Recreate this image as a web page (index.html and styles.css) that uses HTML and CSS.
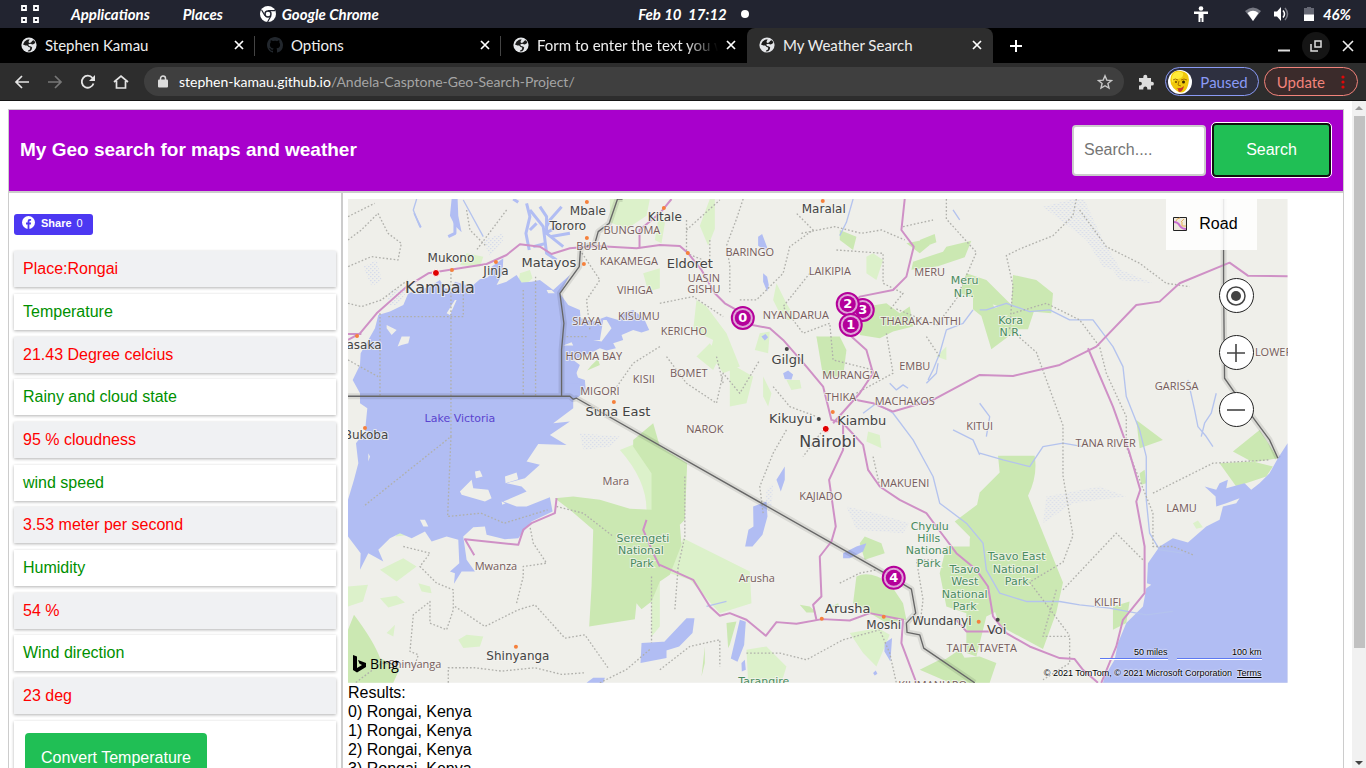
FILE: index.html
```html
<!DOCTYPE html>
<html lang="en">
<head>
<meta charset="utf-8">
<title>My Weather Search</title>
<link rel="stylesheet" href="styles.css">
</head>
<body>
<svg class="defs" width="0" height="0" aria-hidden="true">
  <symbol id="globe" viewBox="0 0 16 16">
    <circle cx="8" cy="8" r="7.6" fill="#e4e6e9"/>
    <path d="M8.600 2.200 6 2.800 3.600 4.600 2 7.600l2.400 1 1.800-.2L7.600 10l1.600.4-.2 2-1.600.8-.6 1.200 2.400-.2 1.400-1.400.6-2.200-1.200-1.200-2-.4-.8-1.400 1.800-.8 2.800.6 1.800-.8 .8-1.400-1.600-2-1.400.6-1.400 1.600-1.600.6-1-1z" fill="#1b1b1b"/>
  </symbol>
  <symbol id="close" viewBox="0 0 10 10"><path d="M1 1 9 9M9 1 1 9" stroke="currentColor" stroke-width="1.700" fill="none"/></symbol>
</svg>

<header class="system">
  <nav class="system-menu">
    <button class="plain" aria-label="Show all apps"><svg width="20" height="20" viewBox="0 0 20 20" fill="none" stroke="#fff" stroke-width="1.800"><path d="M2 2h4v4H2zM14 2h4v4h-4zM2 14h4v4H2zM14 14h4v4h-4z"/></svg></button>
    <button class="plain apps">Applications</button>
    <button class="plain places">Places</button>
    <button class="plain chrome-app"><svg width="16" height="16" viewBox="0 0 16 16"><circle cx="8" cy="8" r="8" fill="#fff"/><circle cx="8" cy="8" r="3" fill="#fff" stroke="#222430" stroke-width="1.400"/><path d="M8 4.600h7M5 9.600 1.600 4M11 9.800 7.600 16" stroke="#222430" stroke-width="1.200"/></svg>Google Chrome</button>
  </nav>
  <div class="clock">Feb 10&nbsp; 17:12<i class="dot"></i></div>
  <div class="tray">
    <svg class="tray-access" width="14" height="16" viewBox="0 0 14 16" fill="#fff"><circle cx="7" cy="2.500" r="2.300"/><path d="M0 5.500h14V8H9.500v8H7.600v-4H6.400v4H4.500V8H0z"/></svg>
    <svg class="tray-wifi" width="16" height="14" viewBox="0 0 16 14"><path d="M0 4Q8-3 16 4L8 14z" fill="#777983"/><path d="M2.500 6Q8 1.500 13.500 6L8 14z" fill="#fff"/></svg>
    <svg class="tray-volume" width="16" height="14" viewBox="0 0 16 14"><path d="M0 4.500h3L7 0v14L3 9.500H0z" fill="#fff"/><path d="M9 3.500q3 3.500 0 7" stroke="#fff" stroke-width="1.500" fill="none"/><path d="M11 1q5 6 0 12" stroke="#777983" stroke-width="1.500" fill="none"/></svg>
    <svg class="tray-battery" width="10" height="14" viewBox="0 0 10 14"><path d="M0 1h3V0h4v1h3v7H0z" fill="#666874"/><path d="M0 7.500h10V14H0z" fill="#fff"/></svg>
    <span>46%</span>
  </div>
</header>

<div class="tabs">
  <div class="tab"><svg width="16" height="16"><use href="#globe"/></svg><span class="tab-title">Stephen Kamau</span><button class="plain" aria-label="Close Stephen Kamau"><svg width="10" height="10"><use href="#close"/></svg></button></div>
  <div class="tab"><svg width="16" height="16" viewBox="0 0 16 16" fill="#22272d"><path d="M8 0C3.580 0 0 3.580 0 8c0 3.540 2.290 6.530 5.470 7.590.4.070.55-.17.55-.38v-1.500c-2.230.490-2.690-1.070-2.690-1.070-.36-.92-.89-1.170-.89-1.170-.73-.5.05-.49.05-.49.810.060 1.230.830 1.230.830.720 1.230 1.880.870 2.340.670.070-.52.280-.87.510-1.070-1.780-.2-3.640-.89-3.640-3.950 0-.87.310-1.590.820-2.150-.08-.2-.36-1.020.080-2.120 0 0 .67-.21 2.200.820A7.600 7.600 0 0 1 8 3.870c.68 0 1.360.09 2 .27 1.530-1.040 2.200-.82 2.200-.82.440 1.100.160 1.920.080 2.120.510.560.820 1.270.820 2.150 0 3.070-1.870 3.750-3.650 3.950.29.250.54.730.54 1.480v2.200c0 .21.150.460.550.380A8 8 0 0 0 16 8c0-4.420-3.580-8-8-8z"/></svg><span class="tab-title">Options</span><button class="plain" aria-label="Close Options"><svg width="10" height="10"><use href="#close"/></svg></button></div>
  <div class="tab"><svg width="16" height="16"><use href="#globe"/></svg><span class="tab-title fade">Form to enter the text you want</span><button class="plain" aria-label="Close Form"><svg width="10" height="10"><use href="#close"/></svg></button></div>
  <div class="tab active"><svg width="16" height="16"><use href="#globe"/></svg><span class="tab-title">My Weather Search</span><button class="plain" aria-label="Close My Weather Search"><svg width="10" height="10"><use href="#close"/></svg></button></div>
  <button class="plain new-tab" aria-label="New tab"><svg width="12" height="12" viewBox="0 0 12 12"><path d="M6 0v12M0 6h12" stroke="#fff" stroke-width="2"/></svg></button>
  <div class="window">
    <button class="plain" aria-label="Minimize"><svg width="12" height="12" viewBox="0 0 12 12"><path d="M0 10.500h12" stroke="#ddd" stroke-width="2"/></svg></button>
    <button class="plain restore" aria-label="Restore"><svg width="12" height="12" viewBox="0 0 12 12" fill="none" stroke="#ddd" stroke-width="1.500"><path d="M5 1h6v6H5zM1 4v7h7"/></svg></button>
    <button class="plain" aria-label="Close window"><svg width="12" height="12" viewBox="0 0 12 12"><path d="M1 1l10 10M11 1 1 11" stroke="#eee" stroke-width="1.600"/></svg></button>
  </div>
</div>

<div class="toolbar">
  <button class="plain nav" aria-label="Back"><svg width="16" height="16" viewBox="0 0 16 16" fill="none" stroke="#e4e4e4" stroke-width="1.700"><path d="M15 8H2M8 2 2 8l6 6"/></svg></button>
  <button class="plain nav" aria-label="Forward"><svg width="16" height="16" viewBox="0 0 16 16" fill="none" stroke="#777" stroke-width="1.700"><path d="M1 8h13M8 2l6 6-6 6"/></svg></button>
  <button class="plain nav" aria-label="Reload"><svg width="16" height="16" viewBox="0 0 16 16"><path d="M13.500 9.500A6 6 0 1 1 12.500 4" fill="none" stroke="#e4e4e4" stroke-width="1.800"/><path d="M15 1v6H9z" fill="#e4e4e4"/></svg></button>
  <button class="plain nav" aria-label="Home"><svg width="16" height="16" viewBox="0 0 16 16" fill="none" stroke="#e4e4e4" stroke-width="1.700"><path d="M1 8 8 2l7 6M3.500 7v7h9V7"/></svg></button>
  <div class="omnibox">
    <svg width="10" height="13" viewBox="0 0 10 13"><rect y="4.500" width="10" height="8" rx="1" fill="#ddd"/><path d="M2.500 5V3.500a2.500 2.500 0 0 1 5 0V5" fill="none" stroke="#ddd" stroke-width="1.500"/></svg>
    <div class="url" role="textbox" aria-label="Address">stephen-kamau.github.io<span>/Andela-Casptone-Geo-Search-Project/</span></div>
    <button class="plain" aria-label="Bookmark"><svg width="16" height="16" viewBox="0 0 16 16"><path d="m8 1.800 1.800 4.300 4.700.4-3.600 3 1.100 4.600L8 11.700l-4 2.400 1.100-4.600-3.600-3 4.700-.4z" fill="none" stroke="#c8c8c8" stroke-width="1.400"/></svg></button>
  </div>
  <button class="plain puzzle" aria-label="Extensions"><svg width="16" height="16" viewBox="0 0 16 16" fill="#ddd"><path d="M1 4h4.300V2.800a2 2 0 0 1 4 0V4H13v3.800h1a1.900 1.900 0 0 1 0 3.800h-1V15.500H9.300v-1a2 2 0 0 0-4 0v1H1v-4h1a1.900 1.900 0 0 0 0-3.800H1z"/></svg></button>
  <button class="pill paused"><svg width="24" height="24" viewBox="0 0 24 24"><circle cx="12" cy="12" r="12" fill="#fff"/><path d="M3 6Q5 0 13 1q8 1 8 9-1 8-4 11-4 3-8 0Q0 15 3 6z" fill="#f0c80c"/><path d="M6 3q5-3 9 0 1 5-5 6-5 1-5 4-3-5 1-10z" fill="#ffea38"/><path d="M5 10q2-2 5 0M13 10q3-2 6 0M11 11l-1 4 3 1" stroke="#a87400" fill="none"/><circle cx="15.500" cy="12" r="1.500" fill="#3a2600"/><circle cx="8" cy="12" r="1" fill="#6a4a00"/><path d="M8 18q5 1 8-2-1 5-4 6-2 0-2-3z" fill="#c8382a"/></svg>Paused</button>
  <button class="pill update">Update<svg width="4" height="14" viewBox="0 0 4 14" fill="#e00808"><circle cx="2" cy="2" r="1.600"/><circle cx="2" cy="7" r="1.600"/><circle cx="2" cy="12" r="1.600"/></svg></button>
</div>

<div class="viewport">
  <main class="page">
    <header class="banner">
      <h3>My Geo search for maps and weather</h3>
      <form class="search">
        <input type="text" placeholder="Search...." aria-label="Search a place">
        <button type="button" class="green focused">Search</button>
      </form>
    </header>

    <section class="weather">
      <button class="share"><svg width="13" height="13" viewBox="0 0 13 13"><circle cx="6.500" cy="6.500" r="6.500" fill="#fff"/><path d="M5.600 13V8.400H4V6.500h1.600V5.200q0-2.200 2.200-2.200h1.300v1.700h-.9q-.8 0-.8.800v1h1.700l-.3 1.900H7.400V13z" fill="#4c38f2"/></svg><b>Share</b> 0</button>
      <ul class="facts">
        <li>Place:Rongai</li>
        <li>Temperature</li>
        <li>21.43 Degree celcius</li>
        <li>Rainy and cloud state</li>
        <li>95 % cloudness</li>
        <li>wind speed</li>
        <li>3.53 meter per second</li>
        <li>Humidity</li>
        <li>54 %</li>
        <li>Wind direction</li>
        <li>23 deg</li>
        <li class="convert"><button class="green">Convert Temperature</button></li>
      </ul>
    </section>

    <section class="results">
      <div class="map">
        <svg class="map-canvas" viewBox="348 199 940 484" preserveAspectRatio="xMidYMid slice" role="img" aria-label="Road map of Kenya">
          <defs>
            <pattern id="marsh" width="12" height="12" patternUnits="userSpaceOnUse"><path d="M1 2h3M7 8h3" stroke="#a9b7ee" stroke-width="2"/></pattern>
          </defs>
          <rect x="348" y="199" width="940" height="484" fill="#efefea"/>
          <g transform="translate(340 190) scale(.33333)" stroke-linejoin="round" fill="none">
            <g class="light-park">
              <path d="M810 27h120l-10 50-60 40-50-20zM910 250l50-15v60l-35 10zM1110 27h15v90l-20 50-25-60zM540 250l30-10 8 25-20 18-22-10zM380 190l50 10-10 30-60-5zM60 540l50-90 20 20-60 120zM200 980l25 20-8 35-50 5zM60 960l20 20 12 40-20 5zM120 960l15 5-10 30-18-8z"/>
              <path d="M120 1140l70-35 40 25-60 45zM24 1190l60-5-15 50-45 15zM120 1225l50-7 25 20-50 15zM235 1180l35 10 5 20-30-5zM140 1330l25-25-5 35zM355 1350l25-15 50 5-10 30-50 5z"/>
              <path d="M840 780l50-20 60 40v165l-30-5q0-90-80-180zM1030 1045l200 100 5 95-95 30-90-100-60-20zM935 1160l25-40v190l-25 30zM1530 1330l85-15 35 20-40 95-40-40zM1220 1380l60-10 60 60-15 49h-100z"/>
              <path d="M1070 330l30 20 60 80 40 100-50 20-40-60 10-40-60-30zM1260 430l30-5-5 65-40-10zM1310 280l30 60 30 50-40 0-30-60zM1580 200l20-10 30 20-20 60-30-20zM1430 440l60 10 30 40-60 50-20-60zM1790 500l30-30v40zM1585 725l35 10 5 40-45-20zM960 60l15 40-10 60-20-10zM1110 460l30 40-20 40-50-40zM1170 520l70 40-20 80-50 10zM1340 570l40 0 5 25-30 5zM1270 560l25 50-10 40-15-30zM2560 1000l15-8 15 20-20 5z"/>
            </g>
            <g class="park">
              <path d="M24 1320l18-45q60 80 78 130l60 30-20 44H24z"/>
              <path d="M645 925l55-5 80 10 90 27 65 3V850l-55-80 0-20 60-50 20 70 82 50-7 170-15 15 5 60-35 90-30 20-25 60-30 23-15-18-5 48-137 22 7-120 5-170-70-60z"/>
              <path d="M1550 1160q40-20 100 20l40 60 10 50-60 10-100-60zM1560 1060l15-20 50 20 10 30-60 20zM780 525l-38 17 12-15 20-20z"/>
              <path d="M1720 215l90-30 10-15 75-18-20 50-80 27-80 10zM1700 160l50-10 20 15-30 25zM1740 150l45-18 5 25-40 15zM1500 120l50 20-10 40-40-30zM1580 350l60-10 40 30 30-20 10 60-60 15-40 20-60-10zM1880 250l60 20 80 80-10 10-150-50zM1430 440l70 0 20 40-10 80-60 0z"/>
              <path d="M2020 255l70 15 50 40-5 60-60-5-60-15zM1900 285l40 15 25 55 30-12 90 15-20 60-30 0-80 60-30-100-25-20zM1975 798h110q10 60-20 120l105 260-20 90-40 110-130-70-30-90-60 0 0-170 30-140 60-60zM1920 1070l-75-75 80-60z"/>
              <path d="M1800 1150l20-80h100l80 80-20 110-40 20-30 120-30-10v-120l-60-20zM1740 1440l60-30 120-10 50 20-20 59h-120zM2760 720l-80 65 60 32 75-12zM2640 820l100-5 60 15-20 30-90 30zM2390 690l80 60-70 25zM2320 1250l50-15-10 65-40 20zM2400 850l15-10 5 40-15 5zM1800 1420l60-40 60 99h-90z"/>
              <path d="M1380 1245l30 5 20 18-30 0zM1475 1250l20-10 5 15zM1160 1300l30-5-20 70-5 10zM1095 1370v50l-10 40z"/>
            </g>
            <g fill="url(#marsh)">
              <path d="M70 230l40-20 15 60-30 20zM150 300l60-5-40 50-30 0zM430 150l60-20 0 20-40 50zM2110 50l120-30 60 130 60 100-60-20-50-80zM1520 950l90 20 100 30-20 30-140-10zM2120 920l160-30 80 30-160 20-90 60zM720 730l120 10-30 30-80 10zM2310 225l130 55-100-10zM1280 900l20-20-5 80-20 10z"/>
            </g>
            <g class="water">
              <path d="M60 640V610L38 570 60 525 62 490 85 450 105 415 115 375 150 365 190 345 205 310 270 290 300 270 315 295 335 298 345 275 395 290 420 268 445 262 455 230 490 205 488 250 470 285 500 275 530 255 545 278 575 275 600 270 640 300 690 255 660 310 685 345 720 360 722 385 760 395 800 380 835 390 845 370 880 360 912 385 928 420 905 428 880 420 845 435 850 450 820 460 828 475 800 482 780 475 750 490 700 510 720 525 705 560 735 570 738 605 700 632 700 655 640 700 690 695 630 735 680 765 595 762 560 815 600 825 555 865 500 880 545 890 560 905 490 935 530 950 560 950 630 922 638 965 575 995 535 1045 495 1048 440 1035 435 1010 400 1012 370 1040 380 1110 405 1145 365 1145 342 1182 345 1150 330 1145 358 1120 355 1050 320 1040 275 1055 255 1025 215 1045 180 1030 150 1045 115 1080 130 1115 85 1090 60 1140 62 1090 24 1040V930L42 870 55 820 48 760 75 725 82 655z"/>
              <path d="M335 27l18 0 2 50 10 50-20-20-15-30zM220 70l5 0 20 40-5 5z"/>
              <path d="M700 440l-35 10v130l55 0-20-60-20-40z"/>
              <path d="M2844 760 2815 805 2790 850 2760 880 2735 900 2715 880 2660 895 2665 870 2640 880 2630 900 2595 890 2628 920 2630 950 2660 940 2700 925 2690 940 2650 950 2640 990 2600 1010 2545 1058 2500 1045 2460 1070 2425 1120 2422 1180 2435 1185 2420 1195 2410 1250 2360 1300 2335 1360 2325 1410 2295 1460 2290 1479H2844z"/>
              <path d="M1240 950l40-15 3 45-15 55-30 35-22 0 10-50 15-10zM1310 870l25-40 0 40-12 35zM1510 1090l40-20 30-10-10 25-40 20-20 0zM960 1370l80-85 24 0-6 45-40 40-58 18zM1200 1290l18 6-5 70-20 50-20-10zM905 1360l75-5v50l-78 15zM740 1479l20-15h35l-5 15zM1635 1360l22-15-5 70-18-30zM1205 1420l10-10 3 30-12 5zM1600 1450l8-8 5 10-8 5zM1255 140l12-8 15 40-5 10-22-15zM1270 250l12 10 5 25-5 20-12-30zM1330 550l15-8 15 12-5 15-20-2zM1265 440l12-8 8 10-10 10z"/>
            </g>
            <g class="creek">
              <path d="M345 90l0 40-20 10M560 40l10 40-12 50 10 50M570 60l40 50 10 80 30 20M600 50l20 30 0 50 50 40M665 50l-35 40-10 20M655 110l-40 20M690 130l-60 10M590 100l-20 20M580 170l40-10M520 27l15 10"/>
            </g>
            <path fill="#efefea" d="M360 905l35-35 5 25 45 5 10 25-20 10-70-20zM405 845l15-3 8 18-20 5zM495 860l35-12 5 20-38 12zM140 405l30 15-15 15-15-20zM185 440l25 0-5 20-20 5-12 5zM320 370l25-40 5 0-20 45zM620 300l15 0 10 10-20 0zM760 450l20 0 10-60 10 0 15 25-30 40zM670 467l25-10 5 10zM485 935l12 5-10 5zM240 990l15 0 10 20-15 0zM85 790l5 10-5 15z"/>
            <g class="river">
              <path d="M240 110l-20-50 10-33M430 140l-60-110M1160 1235l-60 15M1860 90l-20-30M1540 27l-20 70-20 40M1900 360l-30 40-50 20-20 70-20 50-15 30M1760 580l30-30 5-30M1650 580l20 20 20-15 15 10M1570 670l40-30 50 30 60 80 60 110 20 80 80 60 50 60 10 80 40 70 80 25 100 0 60 10 90 10 110 20 80-10"/>
              <path d="M1920 640l30 40-10 60M1920 360l20 0 60-20 70 25 60-5 60 30 70 0 60 80 30 60 10 90 40 100 20 80 0 130 10 100 30 50 70 10M2545 570l20 90 10 50 25 30 20 30M2630 610l-15 60-20 30-10 40M1920 790l70 20 80 20 40-60 60-10 60 10M1840 720l60 30 20 45"/>
            </g>
            <g class="bounds">
              <path d="M24 150l40-30 50-50 30 60 40 30-10 50-80-10-70 30M24 340l40 10 60-20 80-60M120 370v250M145 380h225v-90M333 240v500L70 950M333 740l-10 240 100-10 70 30 130-40M550 300v320M587 260v360M24 80l80-40M380 60l10 60 50 50M24 510l90 50M500 60l-90 120"/>
              <path d="M720 180l60 90-40 60 10 90M740 440h-60M960 470l-80 50-70 100M1040 120l100-90M960 340l100-20 90 60M1040 90v100l50 20M1110 150v80M1210 27l-20 60-30 80 10 60 0 80M1200 330l50 0 80-80 20-80 70-50-50-50M1385 130l100-20 80 20 60-10 70 30M1490 180l140 10v90l60 30-40 50M1410 250l-80 100 60 80 80-30 10 110 120 30M1690 110l90-20M1820 27v60l90 100-60 140-60 80-120-50M1640 430l20 120-110 60M980 500l60 80 90 60 20-90 50 60 60-100M1130 500l20 80M1300 590l50 60 80 30M1450 720l-60 80"/>
              <path d="M2210 27l-10 50-60 60-100 40-40 20 20 90-10 130 80 70 80 220v150l30 180-30 80-100 60 120 160M2220 60l80 110 100 50 80 60 70 10M2020 370l100-30 100 50 60 80 20 80 60 130 0 90 80 200 0 100 60 0 60 25M2440 910l180-90 170-10M2170 1200l160-170 80 80M2150 1200l-40 140h80v80l-80 50M1760 440l40 60M1790 1110l-60 0 20 120-10 80"/>
              <path d="M190 1070l80 20-30 40 50 50 50 20 0 60-20 60-50-20 0-65-50 40-10 110 25 10-10 30-100-5-80 60M345 1250l90 60 100-50 50-15 90 100 60-10 70 100M530 1240l20-80 0-30 70-10-40-60-10-50M325 1479v-45l80 0 80 10 100-10 80 20 70-5M650 950l80 20 90 70M935 1160v200M780 1479l80-40 70-60M1035 860v180l-20 90-10 130M1340 720l-40 70-40 100 10 80M1600 800l20 90M1500 1180l60-30 50-10M1220 1390l100 0 80 20 110-60 110-30 30 70 20 90M960 1440l90-70 90-20 0 80"/>
            </g>
            <path class="halo" d="M24 619H690l10 9 10-3 925 525 80 48 13 72-28 30 2 28 38 7 12 40 153 104M848 27h-15l-25 73-33 25-10 35-43 15-4 55-58 80 12 90-7 80v140M2652 27v263l3 275 35 50 100 135 25 55"/>
            <g class="road">
              <path d="M24 450 60 430 110 370 200 290 265 250 340 238 440 222 500 195 540 163 600 170 635 192 690 175 770 168 890 175 960 165 1020 168 1045 190 1085 240 1125 310 1155 340 1190 360 1210 400 1290 415 1330 450 1400 530 1450 590 1465 650 1475 690 1510 700 1570 765 1585 840 1620 890 1680 930 1760 970 1790 1010 1850 1090 1910 1140 1945 1190 1960 1280 2000 1330 2070 1370 2160 1405 2205 1408 2230 1440 2275 1479"/>
              <path d="M24 432h40M1510 700v80l-42 90 20 140-13 45-35 45 5 120-25 25 10 45M960 1125l100 45 50 80 30 28 30-8 50 20 58 48 32-41 60 5 77-14 83 4 60-22 100 20-5 70 45 119M1850 1290l30 35 90 0"/>
              <path d="M1695 27 1685 120 1722 170 1700 260 1660 300 1560 320 1520 360 1535 440 1580 480 1600 550 1560 610 1480 700M1550 630l50 10 60 25 120-35 140-75 100 3 140-33 110-55 120-125 70-10 60-55 150-62 55 39 119 2M2245 475l75 175 50 140 32 110-12 35 25 135v140l-65 80-20 80-45 109"/>
              <path d="M650 925l-5 45-70 30-25 20-15 45-160-17 28 48M899 175v-55l61-50 35-43M920 990l-10 30 30 70 20 40"/>
            </g>
            <path class="border" d="M24 619H690l10 9 10-3 925 525 80 48 13 72-28 30 2 28 38 7 12 40 153 104M848 27h-15l-25 73-33 25-10 35-43 15-4 55-58 80 12 90-7 80v140M2652 27v263l3 275 35 50 100 135 25 55"/>
          </g>
          <g fill="#f5803c"><circle cx="587" cy="202" r="2"/><circle cx="587" cy="238" r="2"/><circle cx="584" cy="264" r="2"/><circle cx="452" cy="270" r="2"/><circle cx="496" cy="262" r="2"/><circle cx="357" cy="336" r="2"/><circle cx="365" cy="428" r="2"/><circle cx="614" cy="402" r="2"/><circle cx="664" cy="208" r="2"/><circle cx="688" cy="253" r="2"/><circle cx="823" cy="201" r="2"/><circle cx="833" cy="412" r="2"/><circle cx="516" cy="647" r="2"/><circle cx="822" cy="619" r="2"/><circle cx="884" cy="617" r="2"/><circle cx="979" cy="622" r="2"/></g>
          <g fill="#e00000" stroke="#fff"><circle cx="436" cy="273" r="3.500"/><circle cx="826" cy="429" r="3.500"/></g>
          <g fill="#444"><circle cx="787" cy="349" r="2"/><circle cx="819" cy="419" r="2"/><circle cx="998" cy="620" r="2"/></g>
          <g class="label capital"><text x="440" y="293">Kampala</text><text x="828" y="447">Nairobi</text></g>
          <g class="label town">
            <text x="549" y="267">Matayos</text><text x="618" y="416">Suna East</text><text x="690" y="268">Eldoret</text><text x="788" y="364">Gilgil</text><text x="791" y="423">Kikuyu</text><text x="862" y="425">Kiambu</text><text x="848" y="613">Arusha</text><text x="997" y="634">Voi</text>
          </g>
          <g class="label small-town">
            <text x="588" y="215">Mbale</text><text x="568" y="230">Tororo</text><text x="451" y="262">Mukono</text><text x="496" y="275">Jinja</text><text x="364" y="349">asaka</text><text x="366" y="439">Bukoba</text><text x="665" y="221">Kitale</text><text x="824" y="213">Maralal</text><text x="518" y="660">Shinyanga</text><text x="884" y="629">Moshi</text><text x="942" y="625">Wundanyi</text>
          </g>
          <g class="label district">
            <text x="632" y="234">BUNGOMA</text><text x="592" y="250">BUSIA</text><text x="629" y="265">KAKAMEGA</text><text x="635" y="294">VIHIGA</text><text x="587" y="325">SIAYA</text><text x="639" y="320">KISUMU</text><text x="594" y="360">HOMA BAY</text><text x="644" y="383">KISII</text><text x="600" y="395">MIGORI</text><text x="704" y="282">UASIN</text><text x="704" y="293">GISHU</text><text x="750" y="256">BARINGO</text><text x="830" y="275">LAIKIPIA</text><text x="930" y="276">MERU</text><text x="796" y="319">NYANDARUA</text><text x="684" y="335">KERICHO</text><text x="689" y="377">BOMET</text><text x="921" y="325">THARAKA-NITHI</text><text x="915" y="370">EMBU</text><text x="851" y="379">MURANG'A</text><text x="841" y="401">THIKA</text><text x="905" y="405">MACHAKOS</text><text x="705" y="433">NAROK</text><text x="980" y="430">KITUI</text><text x="1106" y="447">TANA RIVER</text><text x="1177" y="390">GARISSA</text><text x="1274" y="356">LOWER</text><text x="821" y="500">KAJIADO</text><text x="905" y="487">MAKUENI</text><text x="1182" y="512">LAMU</text><text x="1108" y="606">KILIFI</text><text x="982" y="652">TAITA TAVETA</text><text x="616" y="485">Mara</text><text x="496" y="570">Mwanza</text><text x="757" y="582">Arusha</text><text x="415" y="668">Shinyanga</text><text x="933" y="689">KILIMANJARO</text>
          </g>
          <g class="label nature">
            <text x="965" y="284">Meru</text><text x="964" y="297">N.P.</text><text x="1011" y="324">Kora</text><text x="1011" y="336">N.R.</text>
            <text x="643" y="542">Serengeti</text><text x="641" y="554">National</text><text x="642" y="567">Park</text>
            <text x="930" y="530">Chyulu</text><text x="929" y="542">Hills</text><text x="929" y="554">National</text><text x="929" y="567">Park</text>
            <text x="965" y="573">Tsavo</text><text x="965" y="585">West</text><text x="965" y="598">National</text><text x="965" y="610">Park</text>
            <text x="1017" y="560">Tsavo East</text><text x="1016" y="573">National</text><text x="1017" y="585">Park</text><text x="764" y="685">Tarangire</text>
          </g>
          <text class="label lake" x="460" y="422">Lake Victoria</text>
          <g class="pin">
            <g><circle cx="863" cy="310" r="11"/><circle cx="863" cy="310" r="8"/><text x="863" y="314">3</text></g>
            <g><circle cx="848" cy="304" r="11"/><circle cx="848" cy="304" r="8"/><text x="848" y="308">2</text></g>
            <g><circle cx="851" cy="325" r="11"/><circle cx="851" cy="325" r="8"/><text x="851" y="329">1</text></g>
            <g><circle cx="743" cy="318" r="11"/><circle cx="743" cy="318" r="8"/><text x="743" y="322">0</text></g>
            <g><circle cx="894" cy="578" r="11"/><circle cx="894" cy="578" r="8"/><text x="894" y="582">4</text></g>
          </g>
        </svg>
        <button class="map-type"><svg width="14" height="14" viewBox="0 0 14 14"><path d="M.5.5h13v13H.5z" fill="#eee8dc" stroke="#222"/><path d="M1 5q4 0 6 4 2 3 6 3" stroke="#c86ed0" stroke-width="2" fill="none"/><path d="M3 4q1-3 4-3M8 5l3-3M9 5v4h4" stroke="#e5b25c" fill="none"/></svg>Road</button>
        <div class="map-controls">
          <button aria-label="Locate me"><svg width="20" height="20" viewBox="0 0 20 20"><circle cx="10" cy="10" r="9" fill="none" stroke="#444" stroke-width="1.500"/><circle cx="10" cy="10" r="5" fill="#444"/></svg></button>
          <button aria-label="Zoom in"><svg width="20" height="20" viewBox="0 0 20 20"><path d="M10 1v18M1 10h18" stroke="#444" stroke-width="1.600"/></svg></button>
          <button aria-label="Zoom out"><svg width="20" height="20" viewBox="0 0 20 20"><path d="M1 10h18" stroke="#444" stroke-width="1.600"/></svg></button>
        </div>
        <div class="bing"><svg width="13" height="18" viewBox="0 0 13 18"><path d="M0 0l4 1.500V13l5-3-2.500-1.200L5 5l8 3v4L4 17.500 0 15z"/></svg>Bing</div>
        <div class="map-legal">
          <div class="scales"><span class="miles">50 miles</span><span class="km">100 km</span></div>
          <div class="copyright">© 2021 TomTom, © 2021 Microsoft Corporation<a href="#">Terms</a></div>
        </div>
      </div>
      <div class="result-list">
        <div>Results:</div>
        <div>0) Rongai, Kenya</div>
        <div>1) Rongai, Kenya</div>
        <div>2) Rongai, Kenya</div>
        <div>3) Rongai, Kenya</div>
        <div>4) Rongai, Kenya</div>
      </div>
    </section>
  </main>
  <div class="scrollbar"><i class="arrow up"></i><i class="thumb"></i><i class="arrow down"></i></div>
</div>
</body>
</html>
```
FILE: styles.css
```css
* { box-sizing: border-box; }
body {
  margin: 0;
  height: 100vh;
  display: flex;
  flex-direction: column;
  overflow: hidden;
  font: 16px "Liberation Sans", Arial, sans-serif;
  background: #fff;
}
svg { flex: none; }
.defs { position: absolute; }
.plain {
  display: flex;
  align-items: center;
  padding: 0;
  border: 0;
  background: none;
  color: inherit;
  font: inherit;
}

/* desktop bar */
.system {
  flex: none;
  display: grid;
  grid-template-columns: 1fr auto 1fr;
  align-items: center;
  height: 28px;
  padding-bottom: 1px;
  background: #222430;
  color: #fff;
  font: italic bold 15px Lato, sans-serif;
}
.system-menu { display: flex; align-items: center; padding-left: 20px; }
.apps { margin-left: 31px; }
.places { margin-left: 33px; }
.chrome-app { margin-left: 37px; gap: 6px; }
.clock { display: flex; align-items: center; gap: 14px; padding-left: 21px; }
.dot { width: 8px; height: 8px; border-radius: 50%; background: #fff; }
.tray { display: flex; align-items: center; justify-content: flex-end; padding-right: 15px; }
.tray-wifi { margin-left: 37px; }
.tray-volume { margin-left: 13px; }
.tray-battery { margin: 0 9px 0 14px; }

/* browser tabs */
.tabs {
  flex: none;
  display: flex;
  height: 35px;
  padding-left: 9px;
  background: #000;
  color: #eee;
  font: 15px Lato, sans-serif;
}
.tab {
  display: flex;
  align-items: center;
  flex: 0 1 246px;
  min-width: 0;
  padding: 0 11px 1px 12px;
  gap: 8px;
  background: linear-gradient(#444, #444) right center / 1px 20px no-repeat;
}
.tab:nth-child(3) { background: none; }
.tab.active { background: #2d2d2d; border-radius: 8px 8px 0 0; }
.tab-title { flex: 1; overflow: hidden; white-space: nowrap; }
.tab .plain { color: #fff; }
.fade { -webkit-mask-image: linear-gradient(90deg, #000 82%, transparent); mask-image: linear-gradient(90deg, #000 82%, transparent); }
.new-tab { margin-left: 17px; }
.window { display: flex; align-items: center; gap: 19px; margin-left: auto; padding-right: 12px; }
.window .restore { justify-content: center; width: 28px; height: 28px; margin: 0 -7px; border-radius: 50%; background: #151515; }

/* address row */
.toolbar {
  flex: none;
  display: flex;
  align-items: center;
  height: 38px;
  padding: 0 8px 0 14px;
  border-bottom: 1px solid #151515;
  background: #2d2d2d;
  color: #fff;
  font: 15px Lato, sans-serif;
}
.nav { margin-right: 17px; }
.nav:nth-child(4) { margin-right: 15px; }
.omnibox {
  flex: 1;
  display: flex;
  align-items: center;
  height: 29px;
  padding: 0 11px 0 14px;
  border-radius: 15px;
  background: #3f3f3f;
  font-size: 14px;
}
.url { flex: 1; margin-left: 11px; }
.url span { color: #a5a5a5; }
.puzzle { margin: 0 11px 0 14px; }
.pill {
  display: flex;
  align-items: center;
  height: 29px;
  border: 1px solid #8a9af5;
  border-radius: 15px;
  color: #8a9af5;
  background: #2e3040;
  font: inherit;
}
.paused { gap: 8px; padding: 0 10px 0 2px; }
.update { gap: 16px; margin-left: 5px; padding: 0 12px 0 12px; border-color: #f2837b; color: #f2837b; background: #3b2b2b; }

/* document area */
.viewport { flex: 1; min-height: 0; display: flex; overflow: hidden; }
.page {
  flex: 1;
  display: grid;
  grid-template-columns: 1fr 3fr;
  grid-template-rows: auto 1fr;
  padding: 8px;
}
.banner, .weather, .results { border: 1px solid #ccc; min-width: 0; }
.banner {
  grid-column: 1 / -1;
  display: flex;
  align-items: center;
  justify-content: space-between;
  padding: 12px 11px 13px 11px;
  background: #a800cc;
  color: #fff;
}
.banner h3 { margin: 0; font-size: 19px; }
.search { display: flex; align-items: center; gap: 5px; }
.search input {
  width: 134px;
  height: 51px;
  padding: 0 10px;
  border: 2px solid #ccc;
  border-radius: 4px;
  font: inherit;
}
.search input::placeholder { color: #757575; }
.green {
  padding: 16px;
  border: 0;
  border-radius: 4px;
  background: #20bf55;
  color: #fff;
  font: inherit;
}
.focused { width: 119px; margin: 1px; border: 2px solid #101010; outline: 1px solid #fff; }

.weather { padding: 21px 5px 0; }
.share {
  display: flex;
  align-items: flex-start;
  height: 21px;
  padding: 2px 10px 0 8px;
  border: 0;
  border-radius: 3px;
  background: #4c38f2;
  color: #fff;
  font: 11px/15px "Liberation Sans", Arial, sans-serif;
}
.share b { margin: 0 5px 0 6px; }
.facts { margin: 16px 0 0; padding: 0; list-style: none; }
.facts li {
  margin-bottom: 7px;
  padding: 9px;
  line-height: 18px;
  color: #009000;
  background: #fff;
  box-shadow: 0 1px 3px rgba(0, 0, 0, .3);
}
.facts li:nth-child(3n) { margin-bottom: 6px; }
.facts li:nth-child(odd) { color: #f00; background: #f0f1f3; }
.facts .convert { padding: 12px 11px; }

.results { padding: 6px 6px 6px 5px; }
.map { position: relative; width: 95%; }
.map-canvas { display: block; width: 100%; }
.light-park { fill: #dcf1ca; }
.park { fill: #cbe8b2; }
.water { fill: #b1bdf3; }
.creek { stroke: #b1bdf3; stroke-width: 9; }
.river { stroke: #b4c3ee; stroke-width: 4; }
.bounds { stroke: #b0b0ab; stroke-width: 4; stroke-dasharray: 5 6; }
.halo { stroke: #000; stroke-opacity: .09; stroke-width: 18; }
.road { stroke: #cf90c6; stroke-width: 6; }
.border { stroke: #666; stroke-width: 4; }
.label {
  text-anchor: middle;
  font-family: "DejaVu Sans", sans-serif;
  fill: #444;
  stroke: #f4f4f0;
  stroke-opacity: .75;
  stroke-width: 2px;
  paint-order: stroke;
}
.capital { font-size: 16px; }
.town { font-size: 13px; }
.small-town { font-size: 12px; }
.district { font-family: "Open Sans", sans-serif; font-size: 11px; fill: #765c5c; }
.nature { font-size: 11px; fill: #4a8b60; }
.lake { font-size: 11px; fill: #5a44cf; stroke: none; }
.pin circle:first-child { fill: #dfa6d8; stroke: #b4009a; stroke-width: 2; }
.pin circle { fill: #b4009a; }
.pin text { fill: #fff; font: bold 13px "DejaVu Sans", sans-serif; text-anchor: middle; }

.map-type {
  position: absolute;
  top: 0;
  right: 31px;
  display: flex;
  align-items: center;
  gap: 12px;
  height: 51px;
  padding: 0 19px 2px 7px;
  border: 0;
  background: rgba(255, 255, 255, .85);
  color: #000;
  font: inherit;
}
.map-controls { position: absolute; top: 79px; right: 34px; display: grid; gap: 22px; }
.map-controls button {
  display: grid;
  place-items: center;
  width: 35px;
  height: 35px;
  padding: 0;
  border: 1px solid #222;
  border-radius: 50%;
  background: #fff;
}
.bing {
  position: absolute;
  left: 5px;
  bottom: 10px;
  display: flex;
  align-items: center;
  gap: 4px;
  font: 14px "Open Sans", sans-serif;
  line-height: 18px;
}
.map-legal {
  position: absolute;
  right: 26px;
  bottom: 4px;
  color: #000;
  font-size: 9px;
  line-height: 12px;
  text-shadow: 0 0 2px #fff, 0 0 2px #fff;
}
.scales { display: flex; justify-content: flex-end; gap: 9px; margin-bottom: 8px; text-align: right; }
.scales span { border-bottom: 1px solid #5d79f2; box-shadow: 0 1px #fff; }
.miles { width: 68px; }
.km { width: 85px; }
.copyright a { margin-left: 5px; color: inherit; }
.result-list { line-height: 19px; }

.scrollbar { display: flex; flex-direction: column; align-items: center; width: 14px; background: #f1f1f1; }
.arrow { border: 4px solid transparent; }
.up { margin: 1px 0 6px; border-bottom-color: #999; }
.thumb { flex: 0 1 532px; align-self: stretch; margin: 0 1px 0 2px; background: #c1c1c1; }
.down { margin: auto 0 3px; border-top-color: #444; border-bottom-width: 0; }
```
